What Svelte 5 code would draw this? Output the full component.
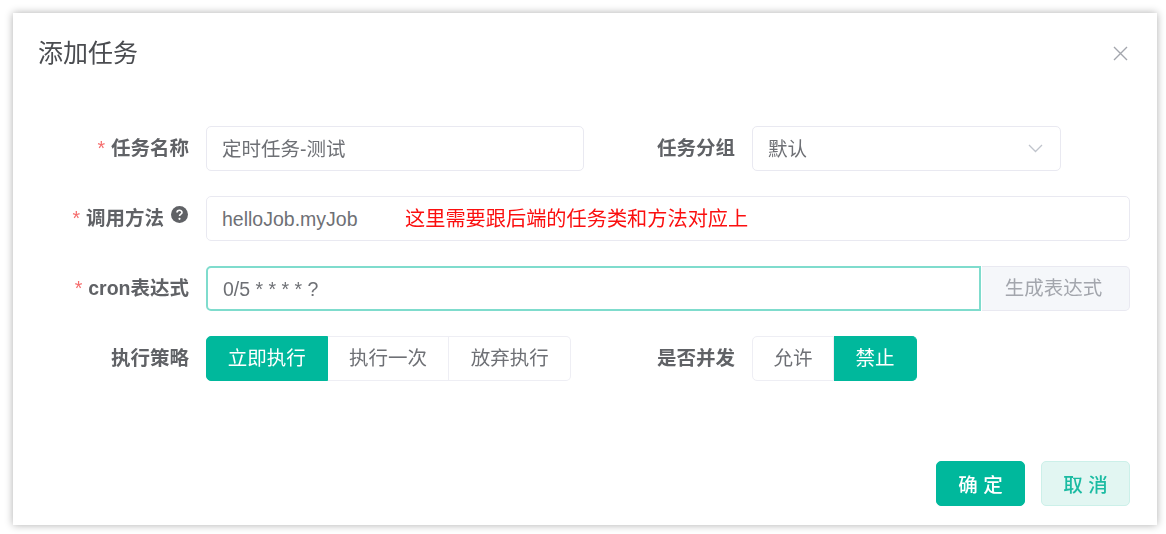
<script lang="ts">
  const strategies = [
    { label: "立即执行", active: true },
    { label: "执行一次", active: false },
    { label: "放弃执行", active: false },
  ];
  const concurrent = [
    { label: "允许", active: false },
    { label: "禁止", active: true },
  ];
</script>

<div class="page">
  <div class="dialog">
    <header class="head">
      <span class="title">添加任务</span>
      <button class="close" aria-label="关闭">
        <svg width="15" height="15" viewBox="0 0 15 15" fill="none" stroke="#a3a6ad" stroke-width="1.4">
          <path d="M1 1 L14 14 M14 1 L1 14" />
        </svg>
      </button>
    </header>

    <div class="form">
      <div class="row">
        <div class="item half">
          <span class="label"><i>*</i>任务名称</span>
          <div class="input">定时任务-测试</div>
        </div>
        <div class="item">
          <span class="label narrow">任务分组</span>
          <div class="input select">
            默认
            <svg width="15" height="9" viewBox="0 0 15 9" fill="none" stroke="#c0c4cc" stroke-width="1.3">
              <path d="M1 1 L7.5 7.5 L14 1" />
            </svg>
          </div>
        </div>
      </div>

      <div class="row">
        <div class="item full">
          <span class="label"><i>*</i>调用方法<svg class="help" width="17" height="17" viewBox="0 0 17 17">
              <circle cx="8.5" cy="8.5" r="8.5" fill="#606266" />
              <path d="M6 6.6 C6 3.6 11 3.6 11 6.4 C11 8.2 8.5 8 8.5 10" fill="none" stroke="#fff" stroke-width="1.6" />
              <circle cx="8.5" cy="12.8" r="1.1" fill="#fff" />
            </svg></span>
          <div class="input method">
            helloJob.myJob
            <span class="note">这里需要跟后端的任务类和方法对应上</span>
          </div>
        </div>
      </div>

      <div class="row">
        <div class="item full">
          <span class="label"><i>*</i><b>cron</b>表达式</span>
          <div class="group">
            <div class="input focus">0/5 * * * * ?</div>
            <div class="append">生成表达式</div>
          </div>
        </div>
      </div>

      <div class="row">
        <div class="item half">
          <span class="label low">执行策略</span>
          <div class="radios">
            {#each strategies as s}
              <span class="radio wide" class:on={s.active}>{s.label}</span>
            {/each}
          </div>
        </div>
        <div class="item">
          <span class="label narrow low">是否并发</span>
          <div class="radios">
            {#each concurrent as c}
              <span class="radio" class:on={c.active}>{c.label}</span>
            {/each}
          </div>
        </div>
      </div>
    </div>

    <footer class="foot">
      <button class="btn primary">确 定</button>
      <button class="btn plain">取 消</button>
    </footer>
  </div>
</div>

<style>
  :global(body) {
    background: #fff;
  }
  .page {
    box-sizing: border-box;
    height: 534px;
    padding: 13px 0 0 13px;
    overflow: hidden;
  }
  .dialog {
    box-sizing: border-box;
    width: 1144px;
    height: 512px;
    padding: 0 27px 19px 0;
    background: #fff;
    box-shadow: 0 0 8px rgba(0, 0, 0, 0.32);
    font-family: "Liberation Sans", "Noto Sans CJK SC", sans-serif;
    font-size: 19.5px;
    color: #606266;
    display: flex;
    flex-direction: column;
    filter: blur(0.4px);
  }
  .head {
    display: flex;
    align-items: center;
    justify-content: space-between;
    height: 80px;
    padding-left: 25px;
    padding-right: 2px;
  }
  .title {
    font-size: 25px;
    line-height: 80px;
    color: #4a4c50;
  }
  .close {
    display: flex;
    padding: 0;
    border: 0;
    background: none;
  }
  .form {
    display: flex;
    flex-direction: column;
    gap: 25px;
    margin-top: 33px;
  }
  .row {
    display: flex;
    height: 45px;
  }
  .item {
    display: flex;
    align-items: center;
  }
  .half {
    width: 571px;
  }
  .full {
    width: 1117px;
  }
  .label {
    box-sizing: border-box;
    width: 176px;
    flex: none;
    margin-right: 17px;
    text-align: right;
    font-weight: 700;
    line-height: 45px;
    white-space: nowrap;
  }
  .label.narrow {
    width: 151px;
  }
  .label.low {
    line-height: 47px;
  }
  .label i {
    color: #f56c6c;
    font-style: normal;
    font-weight: 400;
    margin-right: 6px;
  }
  .label b {
    font-weight: 700;
  }
  .help {
    margin-left: 7px;
    margin-right: -24px;
    vertical-align: 2px;
  }
  .full .label:has(.help) {
    padding-right: 25px;
  }
  .input {
    box-sizing: border-box;
    height: 45px;
    flex: 1;
    min-width: 0;
    padding: 0 15px;
    border: 1.5px solid #e9e9f1;
    border-radius: 5px;
    line-height: 44px;
    font-size: 19.5px;
    color: #6e7075;
    background: #fff;
  }
  .half .input {
    flex: none;
    width: 378px;
  }
  .select {
    width: 309px;
    flex: none;
    display: flex;
    align-items: center;
    justify-content: space-between;
    padding-right: 17px;
  }
  .method {
    position: relative;
  }
  .note {
    position: absolute;
    left: 198px;
    top: 0;
    color: #fb0f0f;
    font-size: 20.2px;
    white-space: nowrap;
  }
  .group {
    display: flex;
    flex: 1;
  }
  .focus {
    border: 2px solid #7fdccd;
    border-radius: 5px 0 0 5px;
    line-height: 43px;
  }
  .append {
    box-sizing: border-box;
    width: 148px;
    height: 45px;
    border: 1.5px solid #e9e9f1;
    border-left: 0;
    border-radius: 0 5px 5px 0;
    background: #f5f7fa;
    color: #a3a6ad;
    line-height: 43px;
    text-align: center;
    padding-right: 4px;
    margin-left: 1px;
  }
  .radios {
    display: flex;
    height: 45px;
  }
  .radio {
    box-sizing: border-box;
    width: 82px;
    height: 45px;
    border: 1.5px solid #eeeef4;
    border-left: 0;
    line-height: 42px;
    text-align: center;
    color: #6e7075;
  }
  .radio.wide {
    width: 121.7px;
  }
  .radio:first-child {
    border-left: 1.5px solid #eeeef4;
    border-radius: 5px 0 0 5px;
  }
  .radio:last-child {
    width: 83px;
    border-radius: 0 5px 5px 0;
  }
  .radio.wide:last-child {
    width: 121.7px;
  }
  .radio.on {
    background: #00b89c;
    border-color: #00b89c;
    color: #fff;
  }
  .foot {
    display: flex;
    justify-content: flex-end;
    gap: 16px;
    margin-top: auto;
  }
  .btn {
    box-sizing: border-box;
    width: 89px;
    height: 45px;
    border-radius: 5px;
    font-family: inherit;
    font-size: 19.5px;
    font-weight: 500;
    padding: 0;
  }
  .primary {
    background: #00b89c;
    border: 1.5px solid #00b89c;
    color: #fff;
  }
  .plain {
    background: #e2f6f2;
    border: 1.5px solid #ccf0e9;
    color: #1bbba2;
  }
</style>
